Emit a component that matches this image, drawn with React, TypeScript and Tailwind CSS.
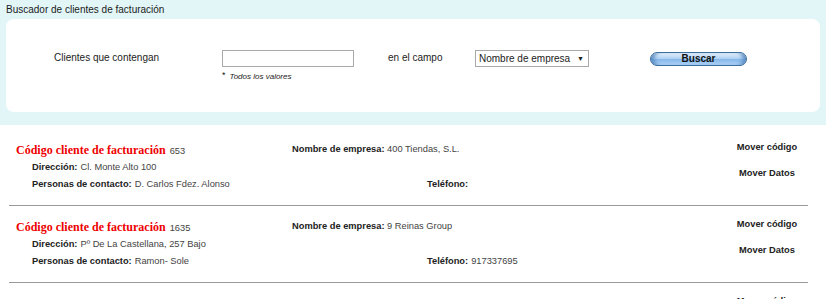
import { useState } from 'react';

interface Cliente {
  codigo: string;
  empresa: string;
  direccion: string;
  contacto: string;
  telefono: string;
}

const clientes: Cliente[] = [
  { codigo: '653', empresa: '400 Tiendas, S.L.', direccion: 'Cl. Monte Alto 100', contacto: 'D. Carlos Fdez. Alonso', telefono: '' },
  { codigo: '1635', empresa: '9 Reinas Group', direccion: 'Pº De La Castellana, 257 Bajo', contacto: 'Ramon- Sole', telefono: '917337695' },
  { codigo: '1702', empresa: 'A.B. Distribuciones, S.L.', direccion: 'Av. de América 12', contacto: 'Luis Pérez', telefono: '915550123' },
];

function Registro({ c }: { c: Cliente }) {
  return (
    <div className="ml-[9px] mr-[18px] flex border-b border-[#9a9a9a] text-[9.3px]">
      <div className="flex-1 pl-[7px] pt-[12px] pb-[12px]">
        <div className="flex h-[18px] items-center">
          <div className="w-[276px] whitespace-nowrap">
            <span className="font-['Liberation_Serif',serif] text-[12px] font-bold text-[#ee0000]">Código cliente de facturación</span>
            <span className="ml-[4px] text-[9.3px] text-[#444]">{c.codigo}</span>
          </div>
          <div className="whitespace-nowrap">
            <span className="font-bold text-[#222]">Nombre de empresa:</span>
            <span className="text-[#444]"> {c.empresa}</span>
          </div>
        </div>
        <div className="flex h-[17px] items-center pl-[16px]">
          <span className="font-bold text-[#222]">Dirección:</span>
          <span className="ml-[3px] text-[#444]">{c.direccion}</span>
        </div>
        <div className="flex h-[17px] items-center">
          <div className="w-[411px] pl-[16px]">
            <span className="font-bold text-[#222]">Personas de contacto:</span>
            <span className="ml-[3px] text-[#444]">{c.contacto}</span>
          </div>
          <div>
            <span className="font-bold text-[#222]">Teléfono:</span>
            <span className="ml-[3px] text-[#444]">{c.telefono}</span>
          </div>
        </div>
      </div>
      <div className="flex w-[82px] flex-col items-center gap-[10px] pt-[10px] font-bold text-[#222]">
        <a className="h-[16px] cursor-pointer leading-[16px]">Mover código</a>
        <a className="h-[16px] cursor-pointer leading-[16px]">Mover Datos</a>
      </div>
    </div>
  );
}

export default function App() {
  const [texto, setTexto] = useState('');
  const [campo, setCampo] = useState('empresa');

  return (
    <div className="min-h-screen bg-white font-['Liberation_Sans',Arial,sans-serif] text-[10px] text-[#222]">
      <div className="bg-[#e2f6f8] px-[6px] pb-[13px]">
        <div className="h-[19px] pt-[3px] leading-[13px] text-[#1a1a1a]">Buscador de clientes de facturación</div>
        <div className="flex h-[93px] items-start rounded-[8px] bg-white pt-[31px]">
          <div className="w-[216px] pl-[48px] leading-[16px]">Clientes que contengan</div>
          <div className="w-[166px]">
            <input
              value={texto}
              onChange={e => setTexto(e.target.value)}
              className="block h-[17px] w-[132px] border border-[#a9a9a9] bg-white px-1 text-[10px] outline-none"
            />
            <div className="mt-[3px] flex items-start text-[8px] italic leading-[10px]">
              <span className="mr-[4px] text-[9px] not-italic">*</span>
              <span className="mt-[2px]">Todos los valores</span>
            </div>
          </div>
          <div className="w-[87px] leading-[16px]">en el campo</div>
          <div className="relative h-[17px] w-[114px]">
            <select
              value={campo}
              onChange={e => setCampo(e.target.value)}
              className="h-[17px] w-[114px] appearance-none border border-[#a9a9a9] bg-white pl-[3px] text-[10px] leading-[15px] outline-none"
            >
              <option value="empresa">Nombre de empresa</option>
              <option value="codigo">Código</option>
              <option value="contacto">Persona de contacto</option>
            </select>
            <span className="pointer-events-none absolute right-[5px] top-[1px] text-[7px] leading-[15px]">▼</span>
          </div>
          <div className="ml-[61px] pt-[1px]">
            <button className="h-[14px] w-[97px] rounded-full border border-[#3c6e9e] bg-[linear-gradient(to_bottom,#e4f0fc_0%,#b3d3f4_45%,#86b8ea_55%,#aed3f6_100%)] text-[10px] font-bold leading-[12px] text-[#111] shadow-[inset_6px_0_4px_-3px_#5a8cc0,inset_-6px_0_4px_-3px_#5a8cc0]">
              Buscar
            </button>
          </div>
        </div>
      </div>
      <div className="pt-[4px]">
        {clientes.map(c => (
          <Registro key={c.codigo} c={c} />
        ))}
      </div>
    </div>
  );
}
